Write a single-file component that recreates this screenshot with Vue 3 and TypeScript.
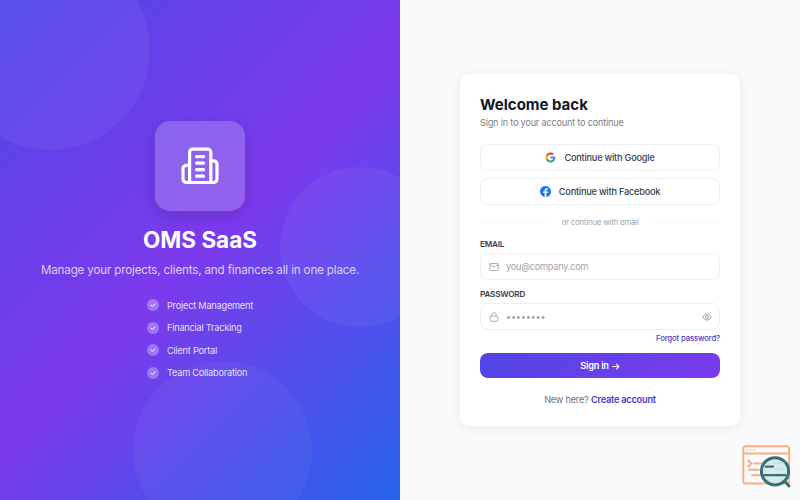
<template>
  <div class="auth-page">
    <section class="brand-panel">
      <div class="circle circle-one"></div>
      <div class="circle circle-two"></div>
      <div class="circle circle-three"></div>

      <div class="brand-content">
        <div class="brand-logo">
          <svg viewBox="0 0 40 40" width="40" height="40" fill="none" stroke="#fff" stroke-width="3.2" stroke-linecap="round" stroke-linejoin="round">
            <path d="M9.6 36.5V6.2a3 3 0 0 1 3-3h15.2a3 3 0 0 1 3 3v30.3z" />
            <path d="M9.6 19.3H6.4a3.4 3.4 0 0 0-3.4 3.4v10.4a3.4 3.4 0 0 0 3.4 3.4h2.8" />
            <path d="M30.8 14.8h2.8a3.4 3.4 0 0 1 3.4 3.4v14.9a3.4 3.4 0 0 1-3.4 3.4h-2.8" />
            <path d="M16.6 10.6h7M16.6 17.1h7M16.6 23.7h7M16.6 30.2h7" />
          </svg>
        </div>
        <h1>OMS SaaS</h1>
        <p class="tagline">Manage your projects, clients, and finances all in one place.</p>
        <ul class="features">
          <li v-for="feature in features" :key="feature">
            <span class="check">
              <svg viewBox="0 0 12 12" width="12" height="12" fill="none" stroke="#fff" stroke-width="1" stroke-linecap="round" stroke-linejoin="round">
                <path d="M4.1 6.2 5.5 7.4 8.1 4.9" />
              </svg>
            </span>
            <span>{{ feature }}</span>
          </li>
        </ul>
      </div>
    </section>

    <section class="form-panel">
      <form class="card" @submit.prevent>
        <h2>Welcome back</h2>
        <p class="subtitle">Sign in to your account to continue</p>

        <button type="button" class="social">
          <svg viewBox="0 0 24 24" width="11" height="11">
            <path fill="#4285F4" d="M22.56 12.25c0-.78-.07-1.53-.2-2.25H12v4.26h5.92c-.26 1.37-1.04 2.53-2.21 3.31v2.77h3.57c2.08-1.92 3.28-4.74 3.28-8.09z" />
            <path fill="#34A853" d="M12 23c2.97 0 5.46-.98 7.28-2.66l-3.57-2.77c-.98.66-2.23 1.06-3.71 1.06-2.86 0-5.29-1.93-6.16-4.53H2.18v2.84C3.99 20.53 7.7 23 12 23z" />
            <path fill="#FBBC05" d="M5.84 14.1a6.6 6.6 0 0 1 0-4.2V7.06H2.18a11 11 0 0 0 0 9.88z" />
            <path fill="#EA4335" d="M12 5.38c1.62 0 3.06.56 4.21 1.64l3.15-3.15C17.45 2.09 14.97 1 12 1 7.7 1 3.99 3.47 2.18 7.06L5.84 9.9C6.71 7.3 9.14 5.38 12 5.38z" />
          </svg>
          <span>Continue with Google</span>
        </button>
        <button type="button" class="social">
          <svg viewBox="0 0 24 24" width="11" height="11">
            <circle cx="12" cy="12" r="11" fill="#fff" />
            <path fill="#1877F2" d="M24 12a12 12 0 1 0-13.88 11.86v-8.39H7.08V12h3.04V9.36c0-3 1.79-4.67 4.53-4.67 1.32 0 2.69.24 2.69.24v2.95h-1.52c-1.49 0-1.95.93-1.95 1.87V12h3.33l-.53 3.47h-2.8v8.39A12 12 0 0 0 24 12z" />
          </svg>
          <span>Continue with Facebook</span>
        </button>

        <div class="divider"><span>or continue with email</span></div>

        <label for="email">EMAIL</label>
        <div class="field">
          <svg viewBox="0 0 12 12" width="10" height="10" fill="none" stroke="#9a9da3" stroke-width="1" stroke-linejoin="round">
            <rect x="0.9" y="1.8" width="10.2" height="8.4" rx="1" />
            <path d="m1.2 3 4.8 3.5L10.8 3" />
          </svg>
          <input id="email" v-model="email" type="text" placeholder="you@company.com" />
        </div>

        <label for="password">PASSWORD</label>
        <div class="field">
          <svg viewBox="0 0 12 12" width="10" height="10" fill="none" stroke="#9a9da3" stroke-width="1" stroke-linejoin="round">
            <rect x="1.4" y="5" width="9.2" height="6.2" rx="1" />
            <path d="M3.3 5V3.5a2.7 2.7 0 0 1 5.4 0V5" />
          </svg>
          <input id="password" v-model="password" class="password" :type="showPassword ? 'text' : 'password'" placeholder="••••••••" />
          <svg class="eye" viewBox="0 0 12 12" width="10" height="10" fill="none" stroke="#8b8e94" stroke-width="1" @click="showPassword = !showPassword">
            <path d="M.9 6C2 3.6 3.8 2.4 6 2.4S10 3.6 11.1 6C10 8.4 8.2 9.6 6 9.6S2 8.4.9 6z" />
            <circle cx="6" cy="6" r="1.8" />
          </svg>
        </div>
        <a class="forgot">Forgot password?</a>

        <button type="submit" class="submit">
          <span>Sign in</span>
          <svg viewBox="0 0 8 8" width="8" height="8" fill="none" stroke="#fff" stroke-width="1.2" stroke-linecap="round" stroke-linejoin="round">
            <path d="M.8 4.5h6M4.5 2.2 6.8 4.5 4.5 6.8" />
          </svg>
        </button>
        <p class="signup">New here? <a>Create account</a></p>
      </form>
    </section>

    <svg class="inspect-badge" viewBox="0 0 50 46" width="50" height="46" fill="none" stroke-linecap="round">
      <g stroke="#f5b083" stroke-width="2">
        <rect x="1.3" y="2.2" width="45.8" height="37.3" rx="2.5" />
        <path d="M1.3 9.6h45.8" />
        <path d="M5 6h.1M8.5 6h.1M12 6h.1" stroke-width="1.6" />
        <path d="m6.3 16.5 3 3-3 3M12 19.5h9M7 25.7h10M10 31.3h8" />
      </g>
      <circle cx="33" cy="27.3" r="13.6" fill="#d6eaea" stroke="#397078" stroke-width="3" />
      <path d="M32 19h10M32 25.2h8" stroke="#c5dede" stroke-width="1.3" />
      <path d="M23.5 22.6h7.5M22 31.2h21.5" stroke="#397078" stroke-width="2.2" />
      <path d="m43 37.5 4 4.5" stroke="#397078" stroke-width="3" />
    </svg>
  </div>
</template>

<script setup lang="ts">
import { ref } from 'vue';

const features: string[] = [
  'Project Management',
  'Financial Tracking',
  'Client Portal',
  'Team Collaboration',
];

const email = ref('');
const password = ref('');
const showPassword = ref(false);
</script>

<style>
body {
  margin: 0;
}
</style>

<style scoped>
.auth-page {
  position: relative;
  display: flex;
  width: 100%;
  height: 100vh;
  overflow: hidden;
  font-family: Inter, "Liberation Sans", sans-serif;
}

.auth-page * {
  box-sizing: border-box;
}

.brand-panel {
  position: relative;
  flex: 1;
  display: flex;
  justify-content: center;
  overflow: hidden;
  color: #fff;
  background: linear-gradient(135deg, #4f46e5 0%, #7c3aed 50%, #2563eb 100%);
}

.circle {
  position: absolute;
  border-radius: 50%;
  background: rgba(255, 255, 255, 0.05);
}

.circle-one {
  top: -50px;
  left: -50px;
  width: 200px;
  height: 200px;
}

.circle-two {
  top: 167px;
  right: -40px;
  width: 160px;
  height: 160px;
}

.circle-three {
  bottom: -40px;
  left: 133px;
  width: 179px;
  height: 179px;
  background: rgba(255, 255, 255, 0.04);
}

.brand-content {
  position: relative;
  display: flex;
  flex-direction: column;
  align-items: center;
  padding-top: 121px;
}

.brand-logo {
  display: flex;
  align-items: center;
  justify-content: center;
  width: 90px;
  height: 90px;
  border-radius: 15px;
  background: rgba(255, 255, 255, 0.2);
  box-shadow: 0 5px 16px rgba(0, 0, 0, 0.15);
}

h1 {
  margin: 15px 0 0;
  font-size: 22.5px;
  line-height: 28px;
  font-weight: 700;
}

.tagline {
  margin: 7px 0 0;
  font-size: 11.6px;
  line-height: 18px;
  letter-spacing: -0.15px;
  white-space: nowrap;
  color: rgba(255, 255, 255, 0.75);
}

.features {
  display: flex;
  flex-direction: column;
  gap: 10.5px;
  margin: 20px 0 0;
  padding: 0;
  list-style: none;
}

.features li {
  display: flex;
  align-items: center;
  gap: 8px;
  height: 12px;
  font-size: 9.2px;
  letter-spacing: -0.22px;
  color: rgba(255, 255, 255, 0.85);
}

.check {
  display: flex;
  width: 12px;
  height: 12px;
  border-radius: 50%;
  background: rgba(255, 255, 255, 0.3);
}

.form-panel {
  flex: 1;
  display: flex;
  align-items: center;
  justify-content: center;
  background: #f9fafb;
}

.card {
  display: flex;
  flex-direction: column;
  width: 280px;
  height: 352px;
  padding: 20px;
  border-radius: 10px;
  background: #fff;
  box-shadow: 0 2px 12px rgba(15, 23, 42, 0.07);
  letter-spacing: -0.22px;
}

.card > * {
  flex-shrink: 0;
}

h2 {
  margin: 0;
  font-size: 15px;
  line-height: 21px;
  font-weight: 700;
  letter-spacing: 0;
  color: #111827;
}

.subtitle {
  margin: 2px 0 15px;
  font-size: 9.2px;
  line-height: 12px;
  color: #7b7f87;
}

button {
  font-family: inherit;
  letter-spacing: inherit;
}

.social {
  display: flex;
  align-items: center;
  justify-content: center;
  gap: 8px;
  height: 27px;
  margin-bottom: 7px;
  border: 1px solid #eeeff1;
  border-radius: 8px;
  background: #fff;
  font-size: 9.2px;
  font-weight: 500;
  color: #374151;
}

.divider {
  display: flex;
  align-items: center;
  gap: 15px;
  height: 10px;
  margin: 5px 0 12px;
  font-size: 7.9px;
  color: #a3a6ac;
}

.divider::before,
.divider::after {
  content: "";
  flex: 1;
  height: 1px;
  background: #f8f8f9;
}

label {
  height: 10px;
  margin-bottom: 4px;
  font-size: 8.2px;
  line-height: 10px;
  font-weight: 600;
  color: #374151;
}

.field {
  display: flex;
  align-items: center;
  height: 27px;
  margin-bottom: 9px;
  padding: 0 7px 0 8px;
  border: 1px solid #eeeff1;
  border-radius: 8px;
}

.field svg {
  flex: none;
}

.field input {
  flex: 1;
  min-width: 0;
  padding: 0 7px;
  border: none;
  outline: none;
  background: transparent;
  font-family: inherit;
  font-size: 9.2px;
  letter-spacing: -0.25px;
  color: #374151;
}

.field input::placeholder {
  color: #a3a3a8;
}

.forgot {
  align-self: flex-end;
  margin-top: -6px;
  font-size: 7.8px;
  line-height: 10px;
  font-weight: 500;
  letter-spacing: -0.17px;
  color: #4f36c9;
}

.submit {
  display: flex;
  align-items: center;
  justify-content: center;
  gap: 3px;
  height: 25px;
  margin-top: 10px;
  border: none;
  border-radius: 8px;
  background: linear-gradient(135deg, #4f46e5, #7c3aed);
  font-size: 9.2px;
  font-weight: 600;
  color: #fff;
}

.signup {
  margin: 15px 0 0;
  font-size: 9.2px;
  line-height: 13px;
  text-align: center;
  color: #6b7280;
}

.signup a {
  font-weight: 600;
  color: #4f36c9;
}

.inspect-badge {
  position: absolute;
  right: 8px;
  bottom: 10px;
}
</style>
